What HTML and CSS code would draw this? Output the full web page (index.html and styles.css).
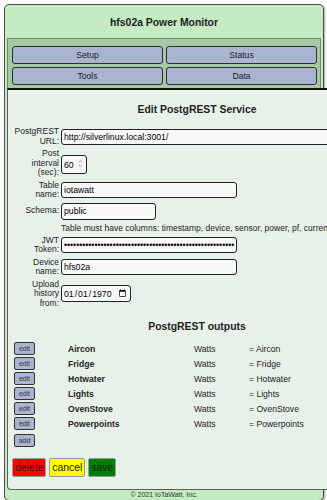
FILE: index.html
```html
<!DOCTYPE html>
<html lang="en">
<head>
    <meta charset="UTF-8">
    <meta name="viewport" content="width=device-width, initial-scale=1.0">
    <title>hfs02a Power Monitor</title>
<link rel="stylesheet" href="styles.css">
</head>
<body>
    <div class="page">
        <div class="title">hfs02a Power Monitor</div>

        <div class="nav">
            <button class="nav-button">Setup</button>
            <button class="nav-button">Status</button>
            <button class="nav-button">Tools</button>
            <button class="nav-button">Data</button>
        </div>

        <div class="content">
            <div class="form">
                <h2 class="form-title">Edit PostgREST Service</h2>

                <div class="fields">
                    <label class="field-label">PostgREST<br>URL:</label>
                    <input class="field-input url" type="text" value="http://silverlinux.local:3001/">

                    <label class="field-label">Post<br>interval<br>(sec):</label>
                    <span class="number-wrap">
                        <input class="field-input number" type="number" value="60">
                        <svg class="spinner" width="5" height="9" viewBox="0 0 5 9">
                            <path d="M0.8 3.2 L2.5 1.4 L4.2 3.2 M0.8 5.8 L2.5 7.6 L4.2 5.8" fill="none" stroke="#9a9a9a" stroke-width="0.9"/>
                        </svg>
                    </span>

                    <label class="field-label">Table<br>name:</label>
                    <input class="field-input wide" type="text" value="iotawatt">

                    <label class="field-label">Schema:</label>
                    <input class="field-input schema" type="text" value="public">

                    <span></span>
                    <span class="note">Table must have columns: timestamp, device, sensor, power, pf, current, volts</span>

                    <label class="field-label">JWT<br>Token:</label>
                    <input class="field-input wide" type="password" value="eyJhbGciOiJIUzI1NiIsInR5cCI6IkpXVCJ9eyJyb2xlIjoiaW90YXdhdHQifQabcdefghijklmnop">

                    <label class="field-label">Device<br>name:</label>
                    <input class="field-input wide" type="text" value="hfs02a">

                    <label class="field-label">Upload<br>history<br>from:</label>
                    <input class="field-input date" type="date" value="1970-01-01">
                </div>

                <h2 class="form-title outputs-title">PostgREST outputs</h2>

                <div class="outputs">
                    <button class="small-button">edit</button>
                    <span class="output-name">Aircon</span>
                    <span>Watts</span>
                    <span>= Aircon</span>

                    <button class="small-button">edit</button>
                    <span class="output-name">Fridge</span>
                    <span>Watts</span>
                    <span>= Fridge</span>

                    <button class="small-button">edit</button>
                    <span class="output-name">Hotwater</span>
                    <span>Watts</span>
                    <span>= Hotwater</span>

                    <button class="small-button">edit</button>
                    <span class="output-name">Lights</span>
                    <span>Watts</span>
                    <span>= Lights</span>

                    <button class="small-button">edit</button>
                    <span class="output-name">OvenStove</span>
                    <span>Watts</span>
                    <span>= OvenStove</span>

                    <button class="small-button">edit</button>
                    <span class="output-name">Powerpoints</span>
                    <span>Watts</span>
                    <span>= Powerpoints</span>
                </div>

                <button class="small-button add-button">add</button>

                <div class="actions">
                    <button class="action-button delete">delete</button>
                    <button class="action-button cancel">cancel</button>
                    <button class="action-button save">save</button>
                </div>
            </div>
        </div>

        <div class="footer">&copy; 2021 IoTaWatt, Inc.</div>
    </div>
</body>
</html>
```

FILE: styles.css
```css
:root {
    --page-green: #c5ebc2;
    --nav-green: #a5c9a2;
    --button-blue: #a9b4d0;
    --panel: #e8f0ea;
    --text: #1e1e1e;
}

html, body {
    overflow: hidden;
}

body {
    margin: 0;
    font-family: "Liberation Sans", Arial, sans-serif;
    color: var(--text);
    background-color: #ffffff;
}

.page {
    width: 320px;
    box-sizing: border-box;
    margin: 4px 0 0 4px;
    border: 1px solid #4a4a4a;
    border-radius: 5px;
    background-color: var(--page-green);
    box-shadow: 1px 1px 2px rgba(0, 0, 0, 0.35);
}

.title {
    height: 30px;
    padding-top: 3px;
    line-height: 30px;
    text-align: center;
    font-size: 10.4px;
    font-weight: bold;
}

.nav {
    margin: 0 2px;
    padding: 7px 3px 3px 4px;
    display: grid;
    grid-template-columns: 1fr 1fr;
    gap: 3px;
    background-color: var(--nav-green);
    border: 1px solid #6f8f6c;
    border-bottom: none;
}

.nav-button {
    height: 18px;
    padding: 0;
    font-family: inherit;
    font-size: 8.6px;
    color: var(--text);
    background-color: var(--button-blue);
    border: 1px solid #2e2e2e;
    border-radius: 3px;
}

.content {
    width: 390px;
    margin-left: 2px;
    padding: 0 0 12px 1px;
    background-color: var(--panel);
    border-top: 2px solid #111111;
    border-left: 1px solid #5d5d5d;
    border-bottom: 1px solid #5d5d5d;
    border-bottom-left-radius: 4px;
}

.form {
    width: 376px;
}

.form-title {
    margin: 14px 0 11px 0;
    line-height: 12px;
    text-align: center;
    font-size: 10.4px;
    font-weight: bold;
}

.fields {
    display: grid;
    grid-template-columns: 50px 1fr;
    column-gap: 2px;
    row-gap: 3px;
    align-items: center;
}

.field-label {
    text-align: right;
    font-size: 8.5px;
    line-height: 9.5px;
}

.field-input {
    box-sizing: border-box;
    height: 16px;
    padding: 0 2px;
    font-family: inherit;
    font-size: 8.7px;
    color: #000000;
    background-color: #f8f8f8;
    border: 1px solid #222222;
    border-radius: 3px;
}

.field-input.url {
    width: 330px;
}

.number-wrap {
    position: relative;
    width: 26px;
    height: 19px;
}

.field-input.number {
    width: 26px;
    height: 19px;
    padding: 0 8px 0 2px;
}

.field-input.number::-webkit-inner-spin-button,
.field-input.number::-webkit-outer-spin-button {
    -webkit-appearance: none;
    margin: 0;
}

.spinner {
    position: absolute;
    right: 4px;
    top: 5px;
}

.field-input.wide {
    width: 176px;
}

.field-input.schema {
    width: 95px;
    height: 17px;
}

.field-input.date {
    width: 70px;
    height: 17px;
    padding: 0 1px;
}

.note {
    font-size: 8.5px;
    line-height: 10px;
    white-space: nowrap;
}

.outputs-title {
    margin: 13px 0 9px 0;
}

.outputs {
    display: grid;
    grid-template-columns: 54px 126px 55px 1fr;
    row-gap: 2px;
    align-items: center;
    margin-left: 5px;
    font-size: 8.6px;
}

.output-name {
    font-weight: bold;
}

.small-button {
    width: 21px;
    height: 13px;
    padding: 0;
    font-family: inherit;
    font-size: 6.8px;
    color: #333333;
    background-color: var(--button-blue);
    border: 1px solid #333333;
    border-radius: 2px;
}

.add-button {
    display: block;
    margin: 4px 0 0 5px;
}

.actions {
    display: flex;
    gap: 3px;
    margin: 11px 0 0 3px;
}

.action-button {
    height: 19px;
    padding: 0 2px;
    font-family: inherit;
    font-size: 10.4px;
    color: #1a1a1a;
    border: 1px solid #9a9a9a;
    border-radius: 2px;
}

.delete {
    background-color: #ff0000;
}

.cancel {
    background-color: #ffff00;
}

.save {
    background-color: #008000;
}

.footer {
    height: 10px;
    line-height: 10px;
    text-align: center;
    font-size: 7px;
    color: #333333;
}
```
